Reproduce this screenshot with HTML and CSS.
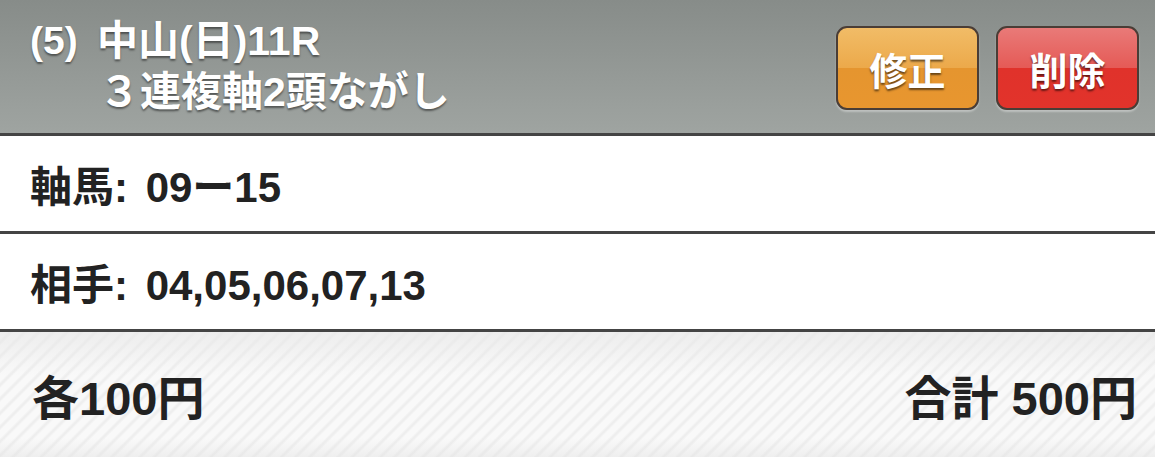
FILE: index.html
```html
<!DOCTYPE html>
<html lang="ja">
<head>
<meta charset="utf-8">
<link rel="stylesheet" href="styles.css">
</head>
<body>
<div class="card">
  <div class="header">
    <div class="title">
      <span class="num">(5)</span>
      <div class="lines">
        <div class="line1">中山(日)11R</div>
        <div class="line2">３連複軸2頭ながし</div>
      </div>
    </div>
    <div class="buttons">
      <div class="btn btn-edit">修正</div>
      <div class="btn btn-del">削除</div>
    </div>
  </div>
  <div class="row">軸馬: 09ー15</div>
  <div class="row">相手: 04,05,06,07,13</div>
  <div class="footer">
    <span>各100円</span>
    <span>合計 500円</span>
  </div>
</div>
</body>
</html>
```

FILE: styles.css
```css
html, body {
  margin: 0;
  padding: 0;
  width: 1155px;
  height: 457px;
  overflow: hidden;
  background: #fff;
}
.card {
  font-family: "Liberation Sans", "Noto Sans CJK JP", sans-serif;
  font-weight: bold;
  display: flex;
  flex-direction: column;
}
.header {
  height: 133px;
  border-bottom: 3px solid #444;
  background: linear-gradient(#878c89, #9fa4a1);
  display: flex;
  justify-content: space-between;
  align-items: center;
  color: #fff;
  text-shadow: 0 2px 2px rgba(0,0,0,0.45);
}
.title {
  display: flex;
  align-items: flex-start;
  padding-left: 30px;
}
.num {
  font-size: 39px;
  line-height: 50px;
  width: 67px;
}
.line1 {
  font-size: 41px;
  line-height: 50px;
}
.line2 {
  font-size: 41px;
  line-height: 52px;
  padding-left: 2px;
}
.buttons {
  display: flex;
  gap: 17px;
  margin-right: 16px;
  margin-top: 3px;
}
.btn {
  width: 139px;
  height: 80px;
  border: 2px solid #4a3d36;
  border-radius: 11px;
  display: flex;
  align-items: center;
  justify-content: center;
  font-size: 38px;
  color: #fff;
  text-shadow: 0 2px 2px rgba(0,0,0,0.55);
  box-shadow: 0 2px 2px rgba(255,255,255,0.35);
}
.btn-edit {
  background: linear-gradient(#f1bc67 0%, #eca94a 50%, #e5952f 50%, #e8962f 100%);
}
.btn-del {
  background: linear-gradient(#e97a78 0%, #e55a56 50%, #e0322b 50%, #e2332b 100%);
}
.row {
  height: 95px;
  border-bottom: 3px solid #444;
  display: flex;
  align-items: center;
  padding-left: 30px;
  font-size: 42px;
  color: #222;
  word-spacing: 6px;
  text-shadow: 0 1px 0 #fff;
}
.footer {
  height: 125px;
  display: flex;
  justify-content: space-between;
  align-items: center;
  padding: 0 18px 0 32px;
  font-size: 47px;
  color: #222;
  background:
    linear-gradient(rgba(232,232,232,0.7), rgba(255,255,255,0) 35%, rgba(255,255,255,0) 85%, rgba(228,228,228,0.5)),
    repeating-linear-gradient(135deg, #f9f9f9 0px, #f9f9f9 5px, #eeeeee 7px, #eeeeee 8px, #f9f9f9 10px);
}
```
